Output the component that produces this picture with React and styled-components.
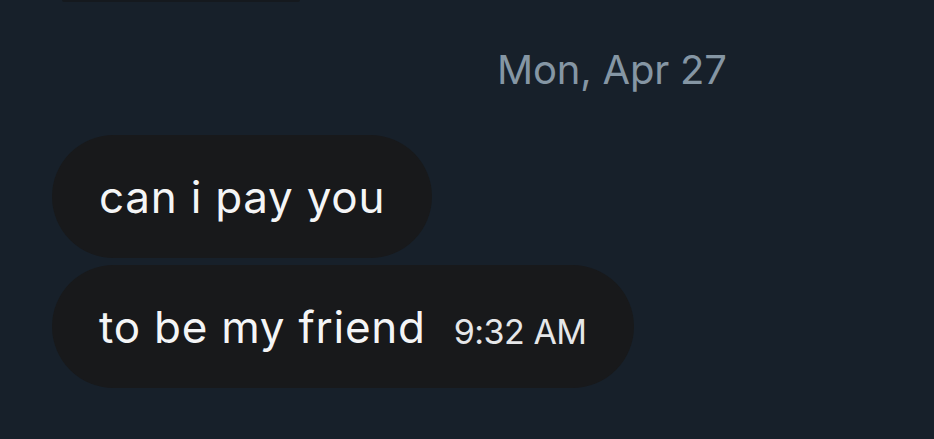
import styled, { createGlobalStyle } from "styled-components";

const GlobalStyle = createGlobalStyle`
  html, body {
    margin: 0;
    padding: 0;
    background: #17202a;
  }
  body {
    font-family: Inter, "Noto Sans", sans-serif;
    -webkit-font-smoothing: antialiased;
  }
`;

const Screen = styled.div`
  width: 934px;
  height: 439px;
  overflow: hidden;
  background: #17202a;
  display: flex;
  flex-direction: column;
`;

const PrevEdge = styled.div`
  width: 238px;
  height: 2px;
  margin-left: 62px;
  background: #15191e;
  border-radius: 0 0 2px 2px;
`;

const DateRow = styled.div`
  display: flex;
  padding-left: 497px;
  margin-top: 38px;
  height: 58px;
  align-items: center;
`;

const DateLabel = styled.span`
  font-size: 40px;
  color: #8596a4;
  letter-spacing: -0.2px;
`;

const Thread = styled.div`
  display: flex;
  flex-direction: column;
  align-items: flex-start;
  gap: 7px;
  padding-left: 52px;
  margin-top: 37px;
`;

const Bubble = styled.div`
  height: 123px;
  box-sizing: border-box;
  padding: 0 47px;
  border-radius: 62px;
  background: #18191b;
  display: flex;
  align-items: center;
  gap: 28px;
`;

const Text = styled.span`
  font-size: 44px;
  color: #f4f5f6;
  letter-spacing: 0.75px;
`;

const Time = styled.span`
  font-size: 34px;
  color: #e6e7e9;
  margin-top: 10px;
  letter-spacing: -0.5px;
`;

export default function App() {
  return (
    <Screen>
      <GlobalStyle />
      <PrevEdge />
      <DateRow>
        <DateLabel>Mon, Apr 27</DateLabel>
      </DateRow>
      <Thread>
        <Bubble>
          <Text>can i pay you</Text>
        </Bubble>
        <Bubble>
          <Text>to be my friend</Text>
          <Time>9:32 AM</Time>
        </Bubble>
      </Thread>
    </Screen>
  );
}
